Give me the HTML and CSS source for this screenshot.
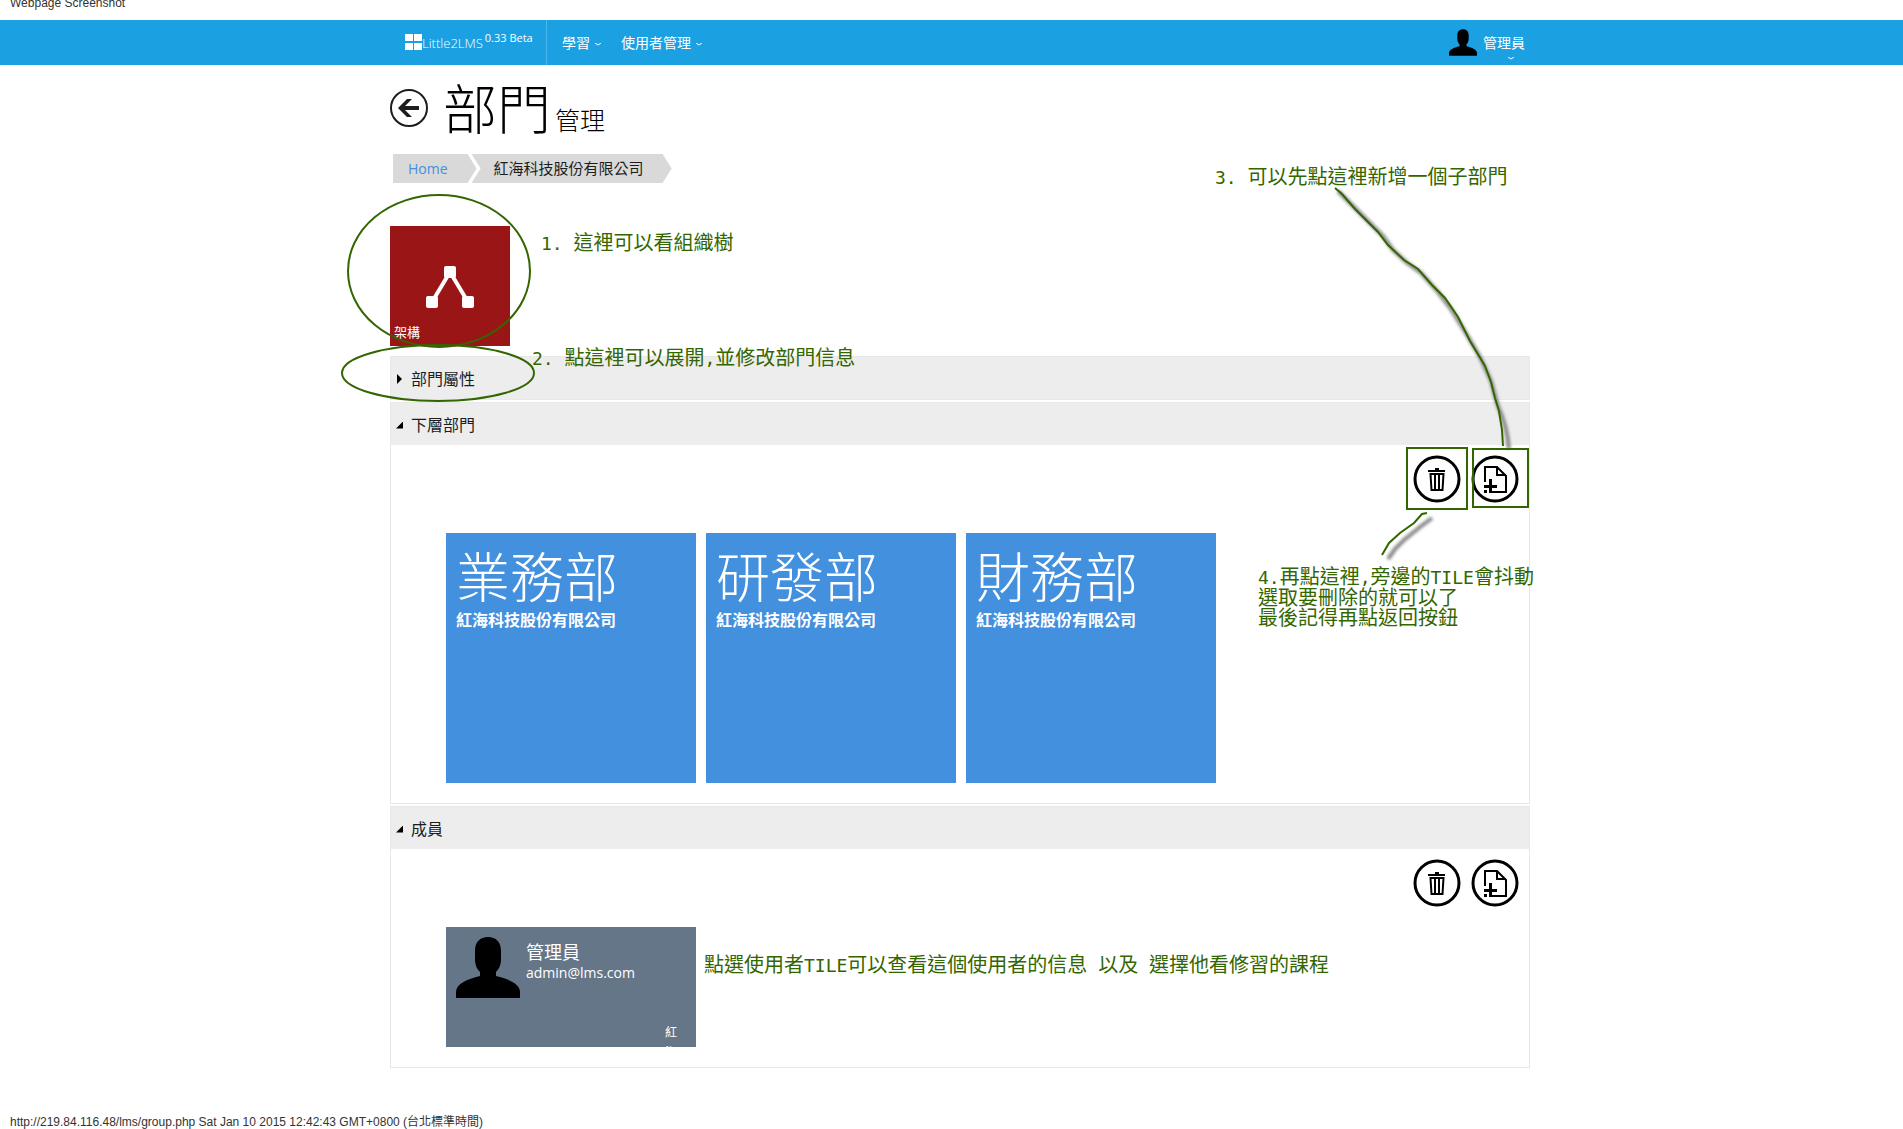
FILE: index.html
```html
<!DOCTYPE html>
<html lang="zh-Hant">
<head>
<meta charset="utf-8">
<title>Little2LMS</title>
<link rel="stylesheet" href="styles.css">
</head>
<body>
<svg class="symbols" aria-hidden="true">
  <symbol id="person" viewBox="0 0 64 61">
    <path d="M32 0c8 0 13 5 13 14v8c0 6-2 10-5 13v4c13 3 24 8 24 16v6H0v-6c0-8 11-13 24-16v-4c-3-3-5-7-5-13v-8C19 5 24 0 32 0z"/>
  </symbol>
  <symbol id="trash" viewBox="0 0 48 48">
    <circle cx="24" cy="24" r="22" fill="none" stroke="currentColor" stroke-width="3"/>
    <path d="M22 13h4v2h6v2H15v-2h7z"/>
    <path d="M17.500 19h13l-1 16h-11z M22 19v16 M26 19v16" fill="none" stroke="currentColor" stroke-width="2"/>
  </symbol>
  <symbol id="add-page" viewBox="0 0 48 48">
    <circle cx="24" cy="24" r="22" fill="none" stroke="currentColor" stroke-width="3"/>
    <path d="M14 27V12h12l9 9v16H21 M26 12v8h8" fill="none" stroke="currentColor" stroke-width="2"/>
    <path d="M18 24h3v6h5v3h-5v5h-3v-5h-5v-3h5z M13 35h3v3h-3z"/>
  </symbol>
  <symbol id="caret" viewBox="0 0 6 4">
    <path d="M0 0l3 2 3-2" fill="none" stroke="currentColor" stroke-width="1"/>
  </symbol>
</svg>

<p class="caption caption-top">Webpage Screenshot</p>

<header class="band topbar">
  <div class="container topbar-row">
    <a class="brand" href="#">
      <svg class="brand-icon" viewBox="0 0 17 16"><path d="M0 0h8v7H0zM9 0h8v7H9zM0 9h8v7H0zM9 9h8v7H9z"/></svg>
      <span>Little2LMS</span><small class="version">0.33 Beta</small>
    </a>
    <nav class="menu">
      <a href="#">學習<svg class="caret"><use href="#caret"/></svg></a>
      <a href="#">使用者管理<svg class="caret"><use href="#caret"/></svg></a>
    </nav>
    <a class="account" href="#">
      <svg class="account-photo"><use href="#person"/></svg>
      <span class="account-name">管理員<svg class="caret account-caret"><use href="#caret"/></svg></span>
    </a>
  </div>
</header>

<main class="band">
  <div class="container page">
    <div class="title">
      <a class="back" href="#" aria-label="返回">
        <svg viewBox="0 0 38 38"><circle cx="19" cy="19" r="18" fill="none" stroke="currentColor" stroke-width="2"/><path d="M8 19l9-9h5l-7 7h14v4H15l7 7h-5z"/></svg>
      </a>
      <h1>部門<small>管理</small></h1>
    </div>

    <nav class="crumbs">
      <a class="crumb crumb-home" href="#">Home</a>
      <a class="crumb crumb-current" href="#">紅海科技股份有限公司</a>
    </nav>

    <a class="tree-tile" href="#">
      <svg viewBox="0 0 48 42"><path d="M24 6L6 36M24 6l18 30" fill="none" stroke="currentColor" stroke-width="4"/><rect x="18" width="12" height="12" rx="2"/><rect y="30" width="12" height="12" rx="2"/><rect x="36" y="30" width="12" height="12" rx="2"/></svg>
      <span>架構</span>
    </a>

    <div class="accordion">
      <details>
        <summary>部門屬性</summary>
      </details>
      <details open>
        <summary>下層部門</summary>
        <div class="panel">
          <div class="actions">
            <button type="button" aria-label="刪除部門"><svg><use href="#trash"/></svg></button>
            <button type="button" aria-label="新增部門"><svg><use href="#add-page"/></svg></button>
          </div>
          <div class="tiles tiles-groups">
            <a class="group-tile" href="#"><h2>業務部</h2><strong>紅海科技股份有限公司</strong></a>
            <a class="group-tile" href="#"><h2>研發部</h2><strong>紅海科技股份有限公司</strong></a>
            <a class="group-tile" href="#"><h2>財務部</h2><strong>紅海科技股份有限公司</strong></a>
          </div>
        </div>
      </details>
      <details open>
        <summary>成員</summary>
        <div class="panel">
          <div class="actions">
            <button type="button" aria-label="刪除成員"><svg><use href="#trash"/></svg></button>
            <button type="button" aria-label="新增成員"><svg><use href="#add-page"/></svg></button>
          </div>
          <div class="tiles">
            <a class="user-tile" href="#">
              <svg class="user-photo"><use href="#person"/></svg>
              <span class="user-info"><span class="user-name">管理員</span><span>admin@lms.com</span></span>
              <span class="user-group">紅海</span>
            </a>
          </div>
        </div>
      </details>
    </div>

    <!-- Hand-drawn marks laid over the page; coordinates are relative to the container -->
    <svg class="marks" aria-hidden="true">
      <defs><filter id="soft" x="-20%" y="-20%" width="140%" height="140%"><feGaussianBlur stdDeviation="1.500"/></filter></defs>
      <ellipse cx="49" cy="206" rx="91" ry="76"/>
      <ellipse cx="48" cy="308" rx="96" ry="28"/>
      <path class="shade" d="M948 126L970 148L993 171L1003 185L1016 197L1031 208L1048 227L1061 244L1077 270L1090 292L1101 316L1108 341Q1117 360 1119 384"/>
      <path class="shade" d="M1042 453L1030 462L1014 475L1005 484L998 494"/>
      <path d="M945 123L952 129L965 144L988 167L998 180L1014 195L1028 204L1042 220L1055 233L1068 252L1080 276L1095 301L1101 317L1105 333L1109 346L1112 365L1113 381"/>
      <path d="M1037 448l-5 1-8 9-14 10-11 10-7 12"/>
      <rect x="1017" y="383" width="60" height="61"/>
      <rect x="1083" y="384" width="55" height="58"/>
    </svg>
    <p class="note note-tree"><span>1. </span>這裡可以看組織樹</p>
    <p class="note note-props"><span>2. </span>點這裡可以展開<span>,</span>並修改部門信息</p>
    <p class="note note-add"><span>3. </span>可以先點這裡新增一個子部門</p>
    <p class="note note-delete"><span>4.</span>再點這裡<span>,</span>旁邊的<span>TILE</span>會抖動<br>選取要刪除的就可以了<br>最後記得再點返回按鈕</p>
    <p class="note note-user">點選使用者<span>TILE</span>可以查看這個使用者的信息<span> </span>以及<span> </span>選擇他看修習的課程</p>
  </div>
</main>

<footer class="caption caption-bottom">http://219.84.116.48/lms/group.php Sat Jan 10 2015 12:42:43 GMT+0800 (台北標準時間)</footer>
</body>
</html>
```
FILE: styles.css
```css
* { box-sizing: border-box; }

body {
  margin: 0;
  background: #fff;
  color: #1d1d1d;
  font: 15px/20px "Open Sans", "Noto Sans CJK TC", sans-serif;
}

a { color: inherit; text-decoration: none; }
p, h1, h2 { margin: 0; font-weight: 300; }
svg { display: block; fill: currentColor; overflow: visible; }
.symbols { position: absolute; width: 0; height: 0; }

.band { padding-left: 17px; }
.container {
  width: 100%;
  max-width: 1140px;
  margin: 0 auto;
}

.caption {
  padding: 0 10px;
  color: #333;
  font: 12px/14px "Liberation Sans", "Noto Sans CJK TC", sans-serif;
}
.caption-top { height: 20px; line-height: 6px; }
.caption-bottom { padding-top: 47px; }

/* Top bar */
.topbar { background: #1ba1e2; color: #fff; }
.topbar-row { display: flex; height: 45px; }
.brand {
  display: flex;
  align-items: center;
  width: 157px;
  padding-left: 15px;
  border-right: 1px solid #4cb7ea;
  font-size: 13px;
  font-weight: 300;
}
.brand-icon { width: 17px; height: 16px; margin-bottom: 2px; }
.version { margin: 0 0 10px 2px; font-size: 11px; font-weight: 400; }
.menu { display: flex; gap: 20px; padding-left: 15px; font-size: 14px; }
.menu a { display: flex; align-items: center; gap: 5px; padding-top: 1px; }
.caret { width: 6px; height: 4px; margin-top: 4px; }
.account {
  display: flex;
  align-items: center;
  gap: 6px;
  margin-left: auto;
  padding-right: 5px;
  font-size: 14px;
}
.account-photo { width: 28px; height: 27px; color: #000; }
.account-name { position: relative; }
.account-caret { position: absolute; right: 11px; top: 24px; margin: 0; }

/* Heading and path */
.page { position: relative; }
.title { display: flex; align-items: center; gap: 15px; padding-top: 9px; }
.back svg { width: 38px; height: 38px; }
h1 {
  display: flex;
  align-items: baseline;
  gap: 4px;
  height: 68px;
  color: #000;
  font-size: 54px;
  line-height: 70px;
}
h1 small { font-size: 25px; }

.crumbs { display: flex; margin: 12px 0 43px 3px; }
.crumb {
  padding: 0 28px 0 22px;
  background: #d9d9d9;
  line-height: 29px;
}
.crumb-home {
  padding: 0 29px 0 15px;
  color: #4390df;
  font-size: 14px;
  clip-path: polygon(0 0, calc(100% - 9px) 0, 100% 50%, calc(100% - 9px) 100%, 0 100%);
}
.crumb-current {
  margin-left: -5px;
  clip-path: polygon(0 0, calc(100% - 9px) 0, 100% 50%, calc(100% - 9px) 100%, 0 100%, 9px 50%);
}

.tree-tile {
  display: flex;
  flex-direction: column;
  justify-content: space-between;
  width: 120px;
  height: 120px;
  padding: 40px 4px 4px;
  background: #9a1616;
  color: #fff;
  font-size: 13px;
}
.tree-tile svg { width: 48px; height: 42px; margin: 0 auto; }

/* Accordion */
.accordion { display: flex; flex-direction: column; gap: 2px; margin-top: 10px; }
details { border: 1px solid #e8e8e8; }
summary {
  display: flex;
  align-items: center;
  gap: 8px;
  padding: 2px 0 0 5px;
  background: #ededed;
  font-size: 16px;
  line-height: 40px;
  list-style: none;
}
summary::before {
  content: "";
  width: 7px;
  height: 10px;
  background: #000;
  clip-path: polygon(1px 0, 6px 50%, 1px 100%);
}
details[open] > summary::before {
  height: 7px;
  clip-path: polygon(100% 0, 100% 100%, 0 100%);
}
.panel { padding: 10px 10px 20px; }
.actions { display: flex; justify-content: flex-end; gap: 10px; }
.actions button { padding: 0; border: 0; background: none; color: #000; }
.actions svg { width: 48px; height: 48px; }
.tiles { display: flex; flex-wrap: wrap; gap: 10px; padding: 20px 0 0 45px; }
.tiles-groups { padding-top: 30px; }
.group-tile {
  width: 250px;
  height: 250px;
  padding: 11px 10px;
  background: #4390df;
  color: #fff;
  font-size: 16px;
}
.group-tile h2 { font-size: 54px; line-height: 66px; }
.group-tile strong { display: block; }
.user-tile {
  position: relative;
  display: flex;
  gap: 6px;
  width: 250px;
  height: 120px;
  padding: 10px;
  background: #647687;
  color: #fff;
  overflow: hidden;
}
.user-photo { width: 64px; height: 61px; color: #000; }
.user-info { display: flex; flex-direction: column; padding-top: 4px; font-size: 14px; }
.user-name { font-size: 18px; line-height: 22px; }
.user-group {
  position: absolute;
  right: 18px;
  top: 96px;
  width: 13px;
  font-size: 12px;
  line-height: 20px;
}

/* Marks and notes over the page */
.marks {
  position: absolute;
  top: 0;
  left: 0;
  width: 100%;
  height: 100%;
  fill: none;
  stroke: #360;
  stroke-width: 2;
  pointer-events: none;
}
.marks .shade { stroke: #888; stroke-width: 4; filter: url(#soft); }
.note {
  position: absolute;
  color: #360;
  font-size: 20px;
  font-weight: 400;
  line-height: 20px;
  white-space: pre;
}
.note span { font: 18px/20px "DejaVu Sans Mono", monospace; }
.note-tree { left: 151px; top: 168px; }
.note-props { left: 142px; top: 283px; }
.note-add { left: 825px; top: 102px; }
.note-delete { left: 868px; top: 502px; }
.note-user { left: 314px; top: 890px; }
```
